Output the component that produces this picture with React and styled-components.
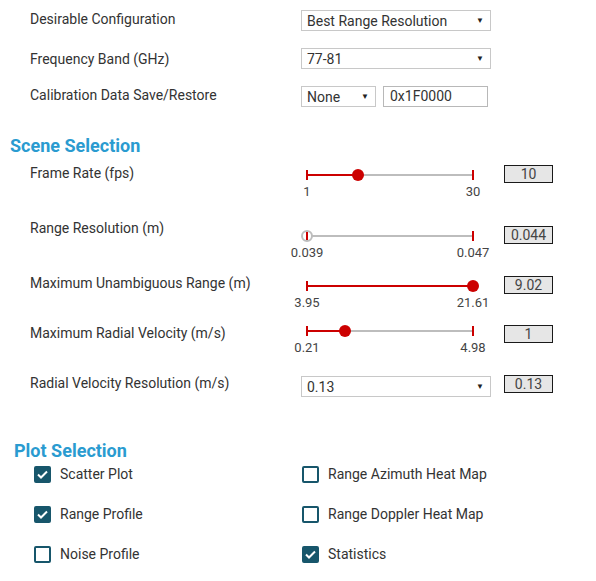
import React from "react";
import styled, { createGlobalStyle } from "styled-components";

const GlobalStyle = createGlobalStyle`
  body {
    margin: 0;
    background: #fff;
    font-family: Roboto, "Liberation Sans", sans-serif;
    color: #333;
  }
`;

const Page = styled.div`
  width: 596px;
  height: 581px;
  padding-top: 10px;
  box-sizing: border-box;
  overflow: hidden;
`;

const ConfigRow = styled.div`
  display: grid;
  grid-template-columns: 271px auto;
  align-items: center;
  padding-left: 30px;
  height: 21px;
  margin-bottom: 17px;
`;

const Label = styled.div`
  font-size: 14px;
  line-height: 20px;
  color: #333;
  white-space: nowrap;
  margin-top: ${(p) => p.$shift || 0}px;
`;

const SelectBox = styled.div`
  display: flex;
  align-items: center;
  justify-content: space-between;
  box-sizing: border-box;
  width: ${(p) => p.$width || 190}px;
  height: 21px;
  border: 1px solid #c8c8c8;
  padding: 0 6px 0 5px;
  font-size: 14px;
  color: #333;
  background: #fff;
  margin-top: ${(p) => p.$shift || 0}px;
`;

const Arrow = styled.span`
  font-size: 8px;
  color: #222;
`;

const Controls = styled.div`
  display: flex;
  gap: 7px;
`;

const TextInput = styled.div`
  box-sizing: border-box;
  width: 105px;
  height: 21px;
  border: 1px solid #b8b8b8;
  padding: 0 6px;
  font-size: 14px;
  line-height: 19px;
  color: #333;
`;

const Heading = styled.h2`
  margin: ${(p) => p.$top}px 0 0 ${(p) => p.$left}px;
  font-size: 18px;
  line-height: 20px;
  font-weight: 700;
  color: #2a9bd0;
`;

const ParamRow = styled.div`
  display: grid;
  grid-template-columns: 271px 203px 49px;
  align-items: start;
  padding-left: 30px;
  height: ${(p) => p.$height}px;
`;

const ValueBox = styled.div`
  box-sizing: border-box;
  width: 49px;
  height: 18px;
  border: 1px solid #1a1a1a;
  background: #e6e6e6;
  font-size: 14px;
  line-height: 16px;
  text-align: center;
  color: #444;
  margin-top: ${(p) => p.$shift || 0}px;
`;

const SliderWrap = styled.div`
  padding-left: 6px;
  margin-top: ${(p) => p.$shift}px;
`;

const TrackArea = styled.div`
  position: relative;
  width: 166px;
  height: 12px;
`;

const Track = styled.div`
  position: absolute;
  left: 0;
  right: 0;
  top: 5px;
  height: 2px;
  background: #bdbdbd;
`;

const Fill = styled.div`
  position: absolute;
  left: 0;
  top: 5px;
  height: 2px;
  background: #cc0000;
`;

const Tick = styled.div`
  position: absolute;
  top: 1px;
  width: 2px;
  height: 10px;
  margin-left: -1px;
  background: #cc0000;
`;

const Thumb = styled.div`
  position: absolute;
  top: 0;
  width: 12px;
  height: 12px;
  margin-left: -6px;
  border-radius: 50%;
  box-sizing: border-box;
  background: ${(p) => (p.$empty ? "#fff" : "#cc0000")};
  border: ${(p) => (p.$empty ? "2px solid #bdbdbd" : "none")};
`;

const TickLabels = styled.div`
  display: flex;
  justify-content: space-between;
  width: 166px;
  margin-top: 4px;
`;

const TickLabel = styled.div`
  width: 0;
  display: flex;
  justify-content: center;
  white-space: nowrap;
  font-size: 13px;
  line-height: 14px;
  color: #444;
`;

const CheckGrid = styled.div`
  display: grid;
  grid-template-columns: 268px auto;
  row-gap: 20px;
  padding-left: 34px;
  margin-top: 3px;
`;

const CheckItem = styled.label`
  display: flex;
  align-items: center;
  gap: 9px;
  height: 20px;
  font-size: 14px;
  color: #333;
`;

const Box = styled.span`
  display: flex;
  align-items: center;
  justify-content: center;
  box-sizing: border-box;
  width: 17px;
  height: 17px;
  border-radius: 2px;
  border: 2px solid #17566b;
  background: ${(p) => (p.$checked ? "#17566b" : "#fff")};
`;

const Slider = ({ min, max, frac, shift, empty }) => (
  <SliderWrap $shift={shift}>
    <TrackArea>
      <Track />
      <Fill style={{ width: `${frac * 100}%` }} />
      <Tick style={{ left: 0 }} />
      <Tick style={{ left: "100%" }} />
      <Thumb $empty={empty} style={{ left: `${frac * 100}%` }} />
      {empty && <Tick style={{ left: 0, top: 2, height: 8 }} />}
    </TrackArea>
    <TickLabels>
      <TickLabel>{min}</TickLabel>
      <TickLabel>{max}</TickLabel>
    </TickLabels>
  </SliderWrap>
);

const Check = ({ checked, children }) => (
  <CheckItem>
    <Box $checked={checked}>
      {checked && (
        <svg width="11" height="9" viewBox="0 0 11 9">
          <polyline points="1,4.5 4,7.5 10,1.5" fill="none" stroke="#fff" strokeWidth="2" />
        </svg>
      )}
    </Box>
    {children}
  </CheckItem>
);

const sliders = [
  { label: "Frame Rate (fps)", min: "1", max: "30", frac: 0.31, value: "10", height: 55, slider: 6, box: 2 },
  { label: "Range Resolution (m)", min: "0.039", max: "0.047", frac: 0, value: "0.044", height: 55, slider: 12, box: 8, empty: true },
  { label: "Maximum Unambiguous Range (m)", min: "3.95", max: "21.61", frac: 1, value: "9.02", height: 50, slider: 7, box: 3 },
  { label: "Maximum Radial Velocity (m/s)", min: "0.21", max: "4.98", frac: 0.23, value: "1", height: 50, slider: 2, box: 2 },
];

export default function App() {
  return (
    <Page>
      <GlobalStyle />
      <ConfigRow>
        <Label $shift={-3}>Desirable Configuration</Label>
        <SelectBox>
          Best Range Resolution <Arrow>▼</Arrow>
        </SelectBox>
      </ConfigRow>
      <ConfigRow>
        <Label>Frequency Band (GHz)</Label>
        <SelectBox>
          77-81 <Arrow>▼</Arrow>
        </SelectBox>
      </ConfigRow>
      <ConfigRow>
        <Label $shift={-4}>Calibration Data Save/Restore</Label>
        <Controls>
          <SelectBox $width={75}>
            None <Arrow>▼</Arrow>
          </SelectBox>
          <TextInput>0x1F0000</TextInput>
        </Controls>
      </ConfigRow>

      <Heading $top={29} $left={10}>Scene Selection</Heading>
      <div style={{ height: 7 }} />
      {sliders.map((s) => (
        <ParamRow key={s.label} $height={s.height}>
          <Label>{s.label}</Label>
          <Slider min={s.min} max={s.max} frac={s.frac} shift={s.slider} empty={s.empty} />
          <ValueBox $shift={s.box}>{s.value}</ValueBox>
        </ParamRow>
      ))}
      <ParamRow $height={68}>
        <Label>Radial Velocity Resolution (m/s)</Label>
        <SelectBox $shift={3}>
          0.13 <Arrow>▼</Arrow>
        </SelectBox>
        <ValueBox $shift={2}>0.13</ValueBox>
      </ParamRow>

      <Heading $top={0} $left={14}>Plot Selection</Heading>
      <CheckGrid>
        <Check checked>Scatter Plot</Check>
        <Check>Range Azimuth Heat Map</Check>
        <Check checked>Range Profile</Check>
        <Check>Range Doppler Heat Map</Check>
        <Check>Noise Profile</Check>
        <Check checked>Statistics</Check>
      </CheckGrid>
    </Page>
  );
}
